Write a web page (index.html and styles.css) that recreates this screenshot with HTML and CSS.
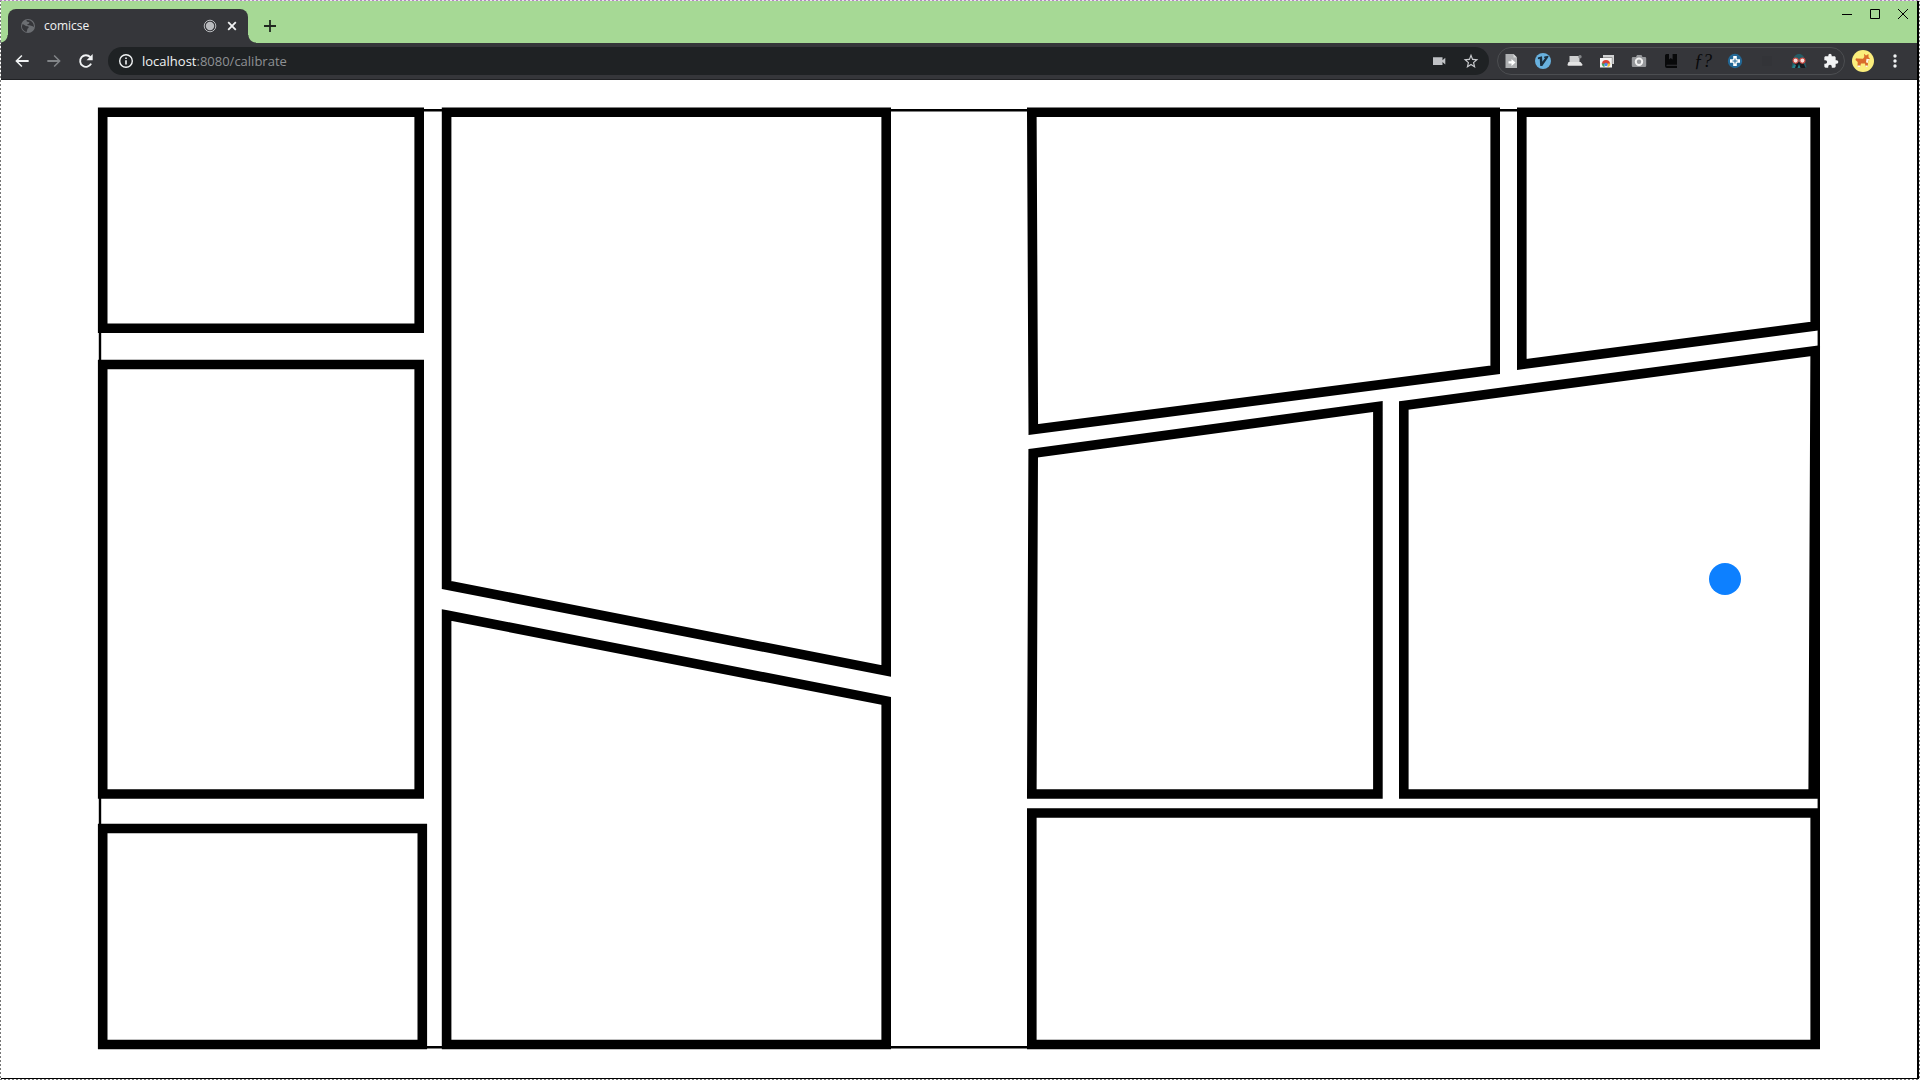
FILE: index.html
```html
<!DOCTYPE html>
<html lang="en">
<head>
<meta charset="utf-8">
<title>comicse</title>
<link rel="stylesheet" href="styles.css">
</head>
<body>
<div class="selection">
<div class="window">
  <header class="titlebar">
    <div class="tab">
      <svg class="icon tab-favicon" viewBox="0 0 24 24"><circle cx="12" cy="12" r="10.5" fill="#6b6e72"/><path fill="#35363a" d="M4 9c2 .5 3 2.500 5 3s4 0 4 2-2 1.500-2 3-1 3-1 4c-4-1-7.500-5-7-9zM10 3c-1 2 1 3 3 3s1 3-1 3-1 2 1 2 3 1 5 1 2 2 3 1C21 7 16 2 10 3z"/></svg>
      <span class="tab-title">comicse</span>
      <svg class="icon tab-recording" viewBox="0 0 16 16"><circle cx="8" cy="8" r="5.800" fill="none" stroke="#b9bbbe"/><circle cx="8" cy="8" r="4.200" fill="#b9bbbe"/></svg>
      <button class="tab-close" aria-label="Close tab"><svg class="icon" viewBox="0 0 16 16"><path d="M4.200 4.200l7.600 7.600M11.800 4.200l-7.600 7.600" stroke="#f1f3f4" stroke-width="1.800"/></svg></button>
    </div>
    <button class="new-tab" aria-label="New tab"><svg class="icon" viewBox="0 0 16 16"><path d="M8 2v12M2 8h12" stroke="#202820" stroke-width="1.800"/></svg></button>
    <div class="window-controls">
      <button aria-label="Minimize"><svg viewBox="0 0 12 12"><path d="M1 6.500h10" stroke="#000"/></svg></button>
      <button aria-label="Maximize"><svg viewBox="0 0 12 12"><path d="M1.500 1.500h9v9h-9z" fill="none" stroke="#000"/></svg></button>
      <button aria-label="Close"><svg viewBox="0 0 12 12"><path d="M1 1l10 10M11 1L1 11" stroke="#000"/></svg></button>
    </div>
  </header>

  <nav class="toolbar">
    <button class="nav-button" aria-label="Back"><svg viewBox="0 0 24 24"><path fill="#f1f3f4" d="M22 10.600H6.600l6-6L11 2.900 1.900 12l9.100 9.100 1.600-1.700-6-6H22z"/></svg></button>
    <button class="nav-button" aria-label="Forward"><svg viewBox="0 0 24 24"><path fill="#828588" d="M2 10.600h15.400l-6-6L13 2.900l9.100 9.100-9.100 9.100-1.600-1.700 6-6H2z"/></svg></button>
    <button class="nav-button" aria-label="Reload"><svg viewBox="0 0 24 24"><path d="M19.700 16A8.700 8.700 0 1 1 18.400 6.200" fill="none" stroke="#f1f3f4" stroke-width="2.800"/><path d="M22 1.500v9.200h-9.200z" fill="#f1f3f4"/></svg></button>

    <div class="omnibox">
      <svg class="icon info" viewBox="0 0 16 16"><circle cx="8" cy="8" r="6.300" fill="none" stroke="#f1f3f4" stroke-width="1.400"/><path d="M8 7.200v4.200M8 4.400v1.700" stroke="#f1f3f4" stroke-width="1.600"/></svg>
      <a class="address" href="#"><span class="host">localhost</span>:8080/calibrate</a>
      <button aria-label="Camera in use"><svg class="icon" viewBox="0 0 16 16"><path fill="#bfc1c4" d="M2 4.200h9.500v3l2.800-2.400v6.600l-2.800-2.400v3H2z"/></svg></button>
      <button aria-label="Bookmark this page"><svg class="icon" viewBox="0 0 24 24"><path fill="#c9cbce" d="M23 9.200l-8.100-.7L12 1 9.100 8.500 1 9.200l6.200 5.400-1.900 8L12 18.400l6.700 4.200-1.900-8zM12 16.300l-4 2.400 1.100-4.600-3.600-3.200 4.700-.4L12 6l1.800 4.500 4.700.4-3.600 3.200 1.100 4.600z"/></svg></button>
    </div>

    <div class="extensions">
      <button aria-label="Page export"><svg class="icon" viewBox="0 0 16 16"><path fill="#aeb0b2" d="M2.500 1h8l3.500 3.500V15H2.500z"/><path fill="#d8d9da" d="M10.500 1v3.500H14z"/><path fill="#fff" d="M5.500 8.300h3V6l4 3.500-4 3.500v-2.400h-3z"/></svg></button>
      <button aria-label="Vimium"><svg class="icon" viewBox="0 0 16 16"><circle cx="8" cy="8" r="8" fill="#68b1df"/><path fill="#1b3040" d="M2.800 4.400L7 3.200l.4 5.600 2.800-4-1.200.2.300-1.400 4.300-.8-.5 1.700L7.300 13H5.200l-.5-7.300-1.700.5z"/></svg></button>
      <button aria-label="Laptop"><svg class="icon" viewBox="0 0 16 16"><path fill="#cfd0d1" d="M2.500 3h10v7h-10z"/><path fill="#e4e4e4" d="M1.500 9h12l2 2.500q0 1.200-1 1.200h-13q-1 0-1-1.200z"/><circle cx="13" cy="3.800" r="1.700" fill="#85878a"/></svg></button>
      <button aria-label="Tab windows"><svg class="icon" viewBox="0 0 16 16"><path fill="#d0d1d2" d="M4 2h11v9H4z"/><path fill="#f5f5f5" d="M1 5h12v9.500H1z"/><path fill="#888" d="M4 4.300h9.500V11h-.7V5H4z"/><path fill="#d94235" d="M3 11a4 4 0 0 1 8 0z"/><path fill="#3fa45b" d="M2.500 10.500h3v3.800q-2.500-.8-3-3.800z"/><path fill="#efc03c" d="M8.500 10.500h3q0 2.500-3 3.800z"/><circle cx="7" cy="11.500" r="1.700" fill="#4a86e8"/></svg></button>
      <button aria-label="Screenshot"><svg class="icon" viewBox="0 0 16 16"><path fill="#96989b" d="M2 4h3l1-2h4.500l1 2H14q1.200 0 1.200 1.200v7.600Q15.200 14 14 14H2q-1.200 0-1.200-1.200V5.200Q.8 4 2 4z"/><circle cx="8" cy="8.800" r="3.200" fill="#96989b" stroke="#f1f1f1" stroke-width="2"/></svg></button>
      <button aria-label="Reading list"><svg class="icon" viewBox="0 0 16 16"><path fill="#08090a" d="M2 2.500Q2 1 3.500 1H6v5.500L7.800 5l1.800 1.500V1H14v10.800H4q-.6 0-.6.500t.6.500h10V15H4q-2 0-2-2z"/></svg></button>
      <button class="font-finder" aria-label="Font finder">ƒ?</button>
      <button aria-label="Controller"><svg class="icon" viewBox="0 0 16 16"><circle cx="8" cy="8" r="7.200" fill="#236896"/><path fill="#fff" d="M6.200 3h3.600v3.200H13v3.600H9.800V13H6.200V9.800H3V6.200h3.200z"/><path stroke="#236896" d="M5.500 8h5M8 5.500v5"/></svg></button>
      <button aria-label="Inactive extension"><svg class="icon" viewBox="0 0 16 16"><path fill="#333438" d="M3 3h10v10H3z"/></svg></button>
      <button aria-label="Privacy mask"><svg class="icon" viewBox="0 0 16 16"><path fill="#245d66" d="M2 8C2.500 3 5 1 8 1s5.500 2 6 7l1.500 6.500H.5z"/><path fill="#171b20" d="M4 9h8l2.500 6h-13z"/><path fill="#26818a" d="M3 11l2 1-1 3H1zM8 11l1.500 4h-3z"/><circle cx="4.600" cy="7.600" r="2.600" fill="#f7dfda" stroke="#c8433c" stroke-width="1.100"/><circle cx="11.400" cy="7.600" r="2.600" fill="#f7dfda" stroke="#c8433c" stroke-width="1.100"/></svg></button>
      <button aria-label="Extensions"><svg class="icon" viewBox="0 0 24 24"><path fill="#f1f3f4" d="M20.500 11H19V7c0-1.100-.9-2-2-2h-4V3.500a2.500 2.500 0 0 0-5 0V5H4c-1.100 0-2 .9-2 2v3.800h1.500a2.700 2.700 0 0 1 0 5.400H2V20c0 1.100.9 2 2 2h3.800v-1.500a2.700 2.700 0 0 1 5.400 0V22H17c1.100 0 2-.9 2-2v-4h1.500a2.500 2.500 0 0 0 0-5z"/></svg></button>
    </div>

    <button class="avatar" aria-label="Profile"><svg viewBox="0 0 22 22"><circle cx="11" cy="11" r="11" fill="#fbee7c"/><path fill="#d96c2b" d="M3.500 10Q3.500 7.500 5.500 8.500l5.500.3 1.300-1.800-.3-3.200 2 1.600 2.500-1.400v3.200l1.500 1.600-1.700 1.600-.6 6.100h-2.200l-.5-3H9l-.8 3H5.500l.2-4.500z"/><path fill="#fff5e0" d="M14.500 8.800l3.500.5-1.800 1.500-.5 2.500-1.700-1zM5.500 15.500h2.800v1.500H5.500zM13.500 15.500h2.200v1.500h-2.200z"/></svg></button>
    <button class="menu" aria-label="Browser menu"><svg class="icon" viewBox="0 0 16 16"><g fill="#f1f3f4"><circle cx="8" cy="3" r="1.700"/><circle cx="8" cy="8" r="1.700"/><circle cx="8" cy="13" r="1.700"/></g></svg></button>
  </nav>

  <main class="page">
    <svg class="comic" viewBox="1 80 1916 998" role="img" aria-label="Comic page panels">
      <path class="sheet" d="M100 110.300H1818.800V1047.300H100z"/>
      <g class="panels">
        <path d="M102.700 112.200H419.200V328.300H102.700z"/>
        <path d="M102.700 364.500H419.200V794H102.700z"/>
        <path d="M102.700 828.500H422.300V1044.500H102.700z"/>
        <path d="M446.600 112.200H886.200V670.900L446.600 585z"/>
        <path d="M446.600 615L886.200 700.900V1044.500H446.600z"/>
        <path d="M1031.800 112.200H1495.200V369.800L1033.300 429.500z"/>
        <path d="M1521.800 112.200H1815.200V326L1521.800 364.500z"/>
        <path d="M1033.200 453.200L1377.900 406.500V794H1031.800z"/>
        <path d="M1403.800 405.400L1815.200 350.700L1813.200 794H1403.800z"/>
        <path d="M1031.800 813H1815.200V1044.500H1031.800z"/>
      </g>
      <circle class="pointer" cx="1725" cy="579" r="16"/>
    </svg>
  </main>
</div>
</div>
</body>
</html>
```
FILE: styles.css
```css
* { box-sizing: border-box; }

body {
  margin: 0;
  background: #fff;
  font-family: "Open Sans", "Noto Sans", sans-serif;
}

button {
  display: flex;
  align-items: center;
  justify-content: center;
  margin: 0;
  padding: 0;
  border: 0;
  background: none;
  font: inherit;
}

svg { display: block; }

.icon { width: 16px; height: 16px; flex: none; }

/* one-pixel dashed capture frame */
.selection {
  min-height: 100vh;
  display: flex;
  padding: 1px;
  background:
    repeating-linear-gradient(90deg, #b184c0 0 2px, #efe8f2 2px 4px) top / 100% 1px no-repeat,
    repeating-linear-gradient(90deg, #777 0 2px, #fff 2px 4px) bottom / 100% 1px no-repeat,
    repeating-linear-gradient(#777 0 2px, #fff 2px 4px);
}

.window {
  flex: 1;
  min-width: 0;
  display: flex;
  flex-direction: column;
  background: #fff;
  border-right: 2px solid #000;
  border-bottom: 1px solid #000;
}

.titlebar {
  display: flex;
  height: 42px;
  padding-left: 7px;
  background: #a6d995;
}

.tab {
  position: relative;
  display: flex;
  align-items: center;
  width: 240px;
  height: 34px;
  margin-top: 8px;
  padding: 0 8px 0 12px;
  background: #35363a;
  border-radius: 8px 8px 0 0;
  color: #f1f3f4;
  font-size: 12px;
  line-height: 16px;
}

.tab::before,
.tab::after {
  content: "";
  position: absolute;
  bottom: 0;
  width: 8px;
  height: 8px;
}

.tab::before {
  left: -8px;
  background: radial-gradient(circle at 0 0, transparent 7px, #35363a 8px);
}

.tab::after {
  right: -8px;
  background: radial-gradient(circle at 100% 0, transparent 7px, #35363a 8px);
}

.tab-title { flex: 1; margin-left: 8px; }
.tab-close { margin-left: 6px; }
.new-tab { width: 28px; height: 28px; margin: 11px 0 0 8px; }

.window-controls {
  display: flex;
  gap: 16px;
  height: 12px;
  margin: 7px 8px 0 auto;
}

.window-controls svg { width: 12px; height: 12px; }

.toolbar {
  display: flex;
  align-items: center;
  height: 37px;
  padding: 0 14px 0 5px;
  background: #35363a;
  border-bottom: 1px solid #202124;
}

.nav-button { width: 32px; height: 28px; }
.nav-button svg { width: 16px; height: 16px; }

.omnibox {
  flex: 1;
  min-width: 0;
  display: flex;
  align-items: center;
  gap: 16px;
  height: 28px;
  margin-left: 6px;
  padding: 0 10px;
  border-radius: 14px;
  background: #1f2224;
}

.address {
  flex: 1;
  margin-left: -8px;
  color: #8e9194;
  font-size: 13px;
  line-height: 20px;
  text-decoration: none;
}

.host { color: #f1f3f4; }

.extensions {
  display: flex;
  align-items: center;
  gap: 8px;
  height: 28px;
  margin-left: 8px;
  padding: 0 1px;
  border: 1px solid #4c4e51;
  border-radius: 14px;
}

.extensions button { width: 24px; height: 24px; }

.extensions .font-finder {
  color: #08090a;
  font-family: "Liberation Serif", serif;
  font-size: 18px;
  font-style: italic;
  line-height: 20px;
}

.avatar { margin-left: 7px; }
.avatar svg { width: 22px; height: 22px; }
.menu { margin-left: 13px; }

.page { flex: 1; }
.comic { width: 100%; height: auto; }
.sheet { fill: none; stroke: #000; stroke-width: 2.4; }
.panels { fill: #fff; stroke: #000; stroke-width: 9.6; }
.pointer { fill: #0d80ff; }
```
